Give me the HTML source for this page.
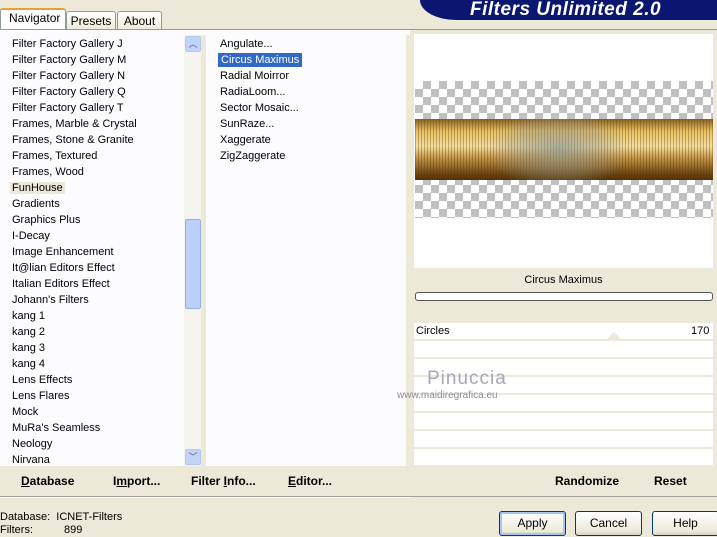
<!DOCTYPE html><html><head><style>
body{margin:0;width:717px;height:536px;background:#ece9d8;font-family:"Liberation Sans",sans-serif;font-size:11px;color:#000;position:relative;overflow:hidden}
.a{position:absolute}
.list div{height:16px;line-height:16px;padding-left:8px;white-space:nowrap}
.btn{position:absolute;top:511px;height:23px;border:1px solid #003c74;border-radius:3px;background:linear-gradient(#fff,#ece9d8 85%,#d6d0c0);text-align:center;line-height:23px;font-size:12px}
.b{font-weight:bold;font-size:12px}
</style></head><body>
<div class="a" style="left:420px;top:0;width:297px;height:20px;background:#0a1670;border-bottom-left-radius:40px 22px"></div>
<div class="a" style="left:470px;top:-1px;color:#fff;font-style:italic;font-weight:bold;font-size:19px;letter-spacing:.5px">Filters Unlimited 2.0</div>
<div class="a" style="left:0;top:8px;width:64px;height:24px;background:#fff;border:1px solid #919b9c;border-bottom:none;border-top:2px solid #e8a030;border-radius:3px 3px 0 0"></div>
<div class="a" style="left:9px;top:11px;font-size:12px">Navigator</div>
<div class="a" style="left:66px;top:11px;width:48px;height:18px;border:1px solid #919b9c;border-radius:3px 3px 0 0;background:linear-gradient(#fff,#ece9d8);font-size:12px;text-align:center;line-height:18px">Presets</div>
<div class="a" style="left:117px;top:11px;width:43px;height:18px;border:1px solid #919b9c;border-radius:3px 3px 0 0;background:linear-gradient(#fff,#ece9d8);font-size:12px;text-align:center;line-height:18px">About</div>
<div class="a" style="left:0;top:29px;width:411px;height:468px;background:#fcfcfe;border-top:1px solid #919b9c"></div>
<div class="a" style="left:411px;top:29px;width:306px;height:1px;background:#919b9c"></div>
<div class="a list" style="left:4px;top:35px;width:180px;top:36px">
<div>Filter Factory Gallery J</div><div>Filter Factory Gallery M</div><div>Filter Factory Gallery N</div><div>Filter Factory Gallery Q</div><div>Filter Factory Gallery T</div><div>Frames, Marble &amp; Crystal</div><div>Frames, Stone &amp; Granite</div><div>Frames, Textured</div><div>Frames, Wood</div><div><span style="background:#ece9d8;padding:0 2px;margin-left:-2px">FunHouse</span></div><div>Gradients</div><div>Graphics Plus</div><div>I-Decay</div><div>Image Enhancement</div><div>It@lian Editors Effect</div><div>Italian Editors Effect</div><div>Johann's Filters</div><div>kang 1</div><div>kang 2</div><div>kang 3</div><div>kang 4</div><div>Lens Effects</div><div>Lens Flares</div><div>Mock</div><div>MuRa's Seamless</div><div>Neology</div><div>Nirvana</div>
</div>
<div class="a" style="left:184px;top:35px;width:17px;height:431px;background:#f4f3ee"></div>
<div class="a" style="left:185px;top:36px;width:14px;height:14px;background:#c1d3fb;border:1px solid #b8c8f0;border-radius:2px;color:#4d6185;font-size:9px;text-align:center;line-height:14px">︿</div>
<div class="a" style="left:185px;top:449px;width:14px;height:14px;background:#c1d3fb;border:1px solid #b8c8f0;border-radius:2px;color:#4d6185;font-size:9px;text-align:center;line-height:14px">﹀</div>
<div class="a" style="left:185px;top:219px;width:14px;height:88px;background:#bcd0fb;border:1px solid #98b0e8;border-radius:2px"></div>
<div class="a" style="left:201px;top:35px;width:5px;height:431px;background:#ece9d8"></div>
<div class="a list" style="left:212px;top:36px;width:190px">
<div>Angulate...</div><div><span style="background:#316ac5;color:#fff;padding:1px 3px;margin-left:-2px">Circus Maximus</span></div><div>Radial Moirror</div><div>RadiaLoom...</div><div>Sector Mosaic...</div><div>SunRaze...</div><div>Xaggerate</div><div>ZigZaggerate</div>
</div>
<div class="a" style="left:406px;top:35px;width:4px;height:431px;background:#ece9d8"></div>
<div class="a" style="left:0;top:466px;width:411px;height:30px;background:#ece9d8"></div>
<div class="a b" style="left:21px;top:474px"><u>D</u>atabase</div>
<div class="a b" style="left:113px;top:474px">I<u>m</u>port...</div>
<div class="a b" style="left:191px;top:474px">Filter <u>I</u>nfo...</div>
<div class="a b" style="left:288px;top:474px"><u>E</u>ditor...</div>
<div class="a" style="left:410px;top:30px;width:307px;height:466px;background:#ece9d8"></div>
<div class="a" style="left:414px;top:34px;width:299px;height:234px;background:#fff"></div>
<div class="a" style="left:415px;top:81px;width:298px;height:137px;background-color:#fff;background-image:linear-gradient(45deg,#c0c0c0 25%,transparent 25%,transparent 75%,#c0c0c0 75%),linear-gradient(45deg,#c0c0c0 25%,transparent 25%,transparent 75%,#c0c0c0 75%);background-size:16px 16px;background-position:0 0,8px 8px"></div>
<div class="a" style="left:415px;top:119px;width:298px;height:61px;background:linear-gradient(#8a6020,#e8c060 20%,#f4e0a0 45%,#c09040 65%,#6a4410 90%,#503008)"></div>
<div class="a" style="left:415px;top:119px;width:298px;height:61px;background:radial-gradient(ellipse 70px 40px at 48% 50%,rgba(140,150,150,.7),rgba(150,150,140,.3) 70%,transparent),repeating-linear-gradient(90deg,rgba(90,60,20,.35) 0 1px,transparent 1px 3px)"></div>
<div class="a" style="left:414px;top:274px;width:299px;text-align:center;font-size:11px">Circus Maximus</div>
<div class="a" style="left:415px;top:292px;width:296px;height:7px;background:#fff;border:1px solid #555;border-radius:3px"></div>
<div class="a" style="left:414px;top:323px;width:299px;height:143px;background:repeating-linear-gradient(#fff 0 16px,#ece9d8 16px 18px)"></div>
<div class="a" style="left:605px;top:332px;width:0;height:0;border-left:9px solid transparent;border-right:9px solid transparent;border-bottom:9px solid #ece9d8"></div>
<div class="a" style="left:416px;top:325px">Circles</div>
<div class="a" style="left:691px;top:325px">170</div>
<div class="a" style="left:427px;top:368px;font-size:19px;color:#a4a8b8;letter-spacing:1px">Pinuccia</div>
<div class="a" style="left:397px;top:390px;font-size:10px;color:#8a8e9c">www.maidiregrafica.eu</div>
<div class="a b" style="left:555px;top:474px">Randomize</div>
<div class="a b" style="left:654px;top:474px">Reset</div>
<div class="a" style="left:0;top:496px;width:717px;height:1px;background:#a0a0a0"></div>
<div class="a" style="left:0;top:511px;line-height:13px">Database:&nbsp;&nbsp;ICNET-Filters<br>Filters:<span style="display:inline-block;width:31px"></span>899</div>
<div class="btn" style="left:499px;width:65px;box-shadow:inset 0 0 0 2px #a8c4f0">Apply</div>
<div class="btn" style="left:575px;width:65px">Cancel</div>
<div class="btn" style="left:652px;width:65px">Help</div>
</body></html>
